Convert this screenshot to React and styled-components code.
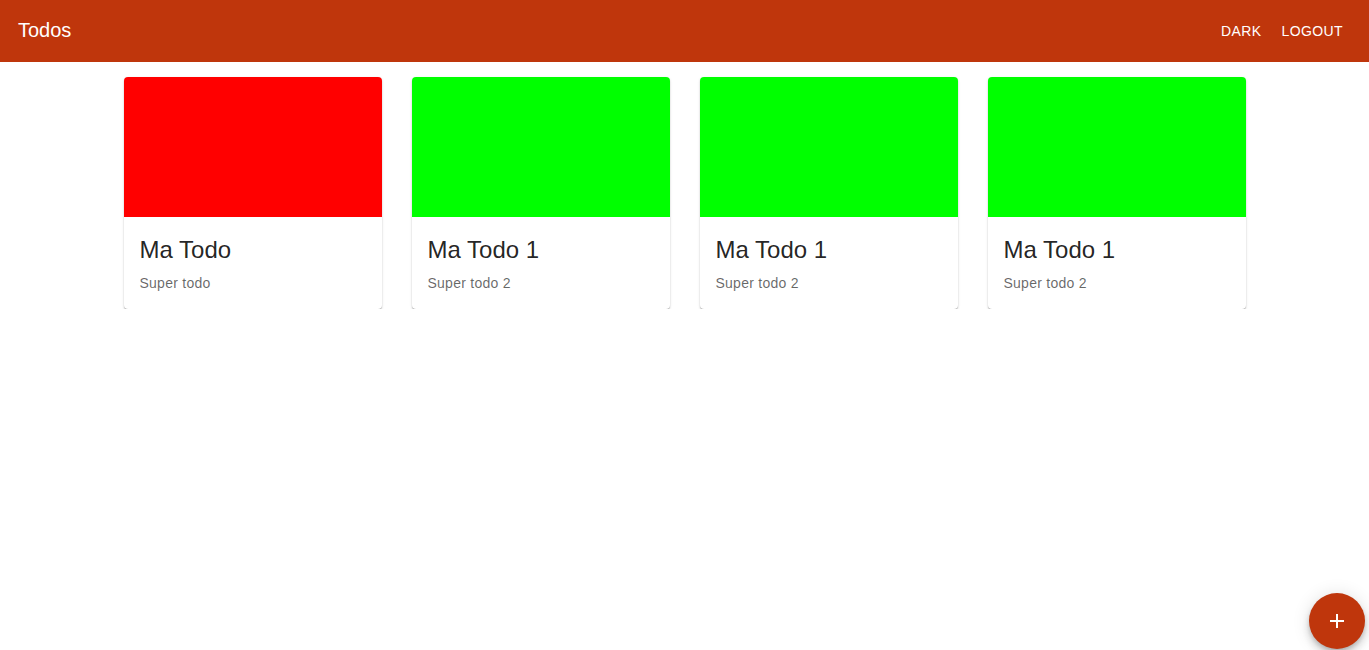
import React from "react";
import styled, { createGlobalStyle } from "styled-components";

const Global = createGlobalStyle`
  body {
    margin: 0;
    background: #fff;
    font-family: "Liberation Sans", Arial, sans-serif;
  }
`;

const Bar = styled.header`
  height: 62px;
  background: #bf360c;
  color: #fff;
  display: flex;
  align-items: center;
  padding: 0 18px 0 18px;
  box-sizing: border-box;
`;

const Title = styled.div`
  font-size: 20px;
  flex: 1;
  margin-top: -2px;
`;

const BarButton = styled.button`
  background: none;
  border: none;
  color: #fff;
  font-family: "Liberation Sans", Arial, sans-serif;
  font-size: 14px;
  letter-spacing: 0.4px;
  text-transform: uppercase;
  padding: 6px 8px;
  margin-left: 4px;
  margin-top: -1px;
  cursor: pointer;
`;

const Grid = styled.main`
  display: flex;
  justify-content: center;
  gap: 30px;
  padding-top: 15px;
`;

const Card = styled.div`
  width: 258px;
  border-radius: 4px;
  overflow: hidden;
  background: #fff;
  box-shadow: 0 2px 2px -1px rgba(0, 0, 0, 0.25), 0 1px 1px 0 rgba(0, 0, 0, 0.16),
    0 1px 3px 0 rgba(0, 0, 0, 0.12);
`;

const Media = styled.div`
  height: 140px;
  background: ${(p) => (p.$done ? "#00ff00" : "#ff0000")};
`;

const Content = styled.div`
  padding: 17px 16px 16px;
`;

const Heading = styled.div`
  font-size: 24px;
  line-height: 32px;
  color: rgba(0, 0, 0, 0.87);
  margin-bottom: 7px;
`;

const Sub = styled.div`
  font-size: 14px;
  line-height: 20px;
  letter-spacing: 0.25px;
  color: rgba(0, 0, 0, 0.6);
`;

const Fab = styled.button`
  position: fixed;
  right: 4px;
  bottom: 1px;
  width: 56px;
  height: 56px;
  border-radius: 50%;
  border: none;
  background: #bf360c;
  color: #fff;
  display: flex;
  align-items: center;
  justify-content: center;
  box-shadow: 0 3px 5px -1px rgba(0, 0, 0, 0.2), 0 6px 10px 0 rgba(0, 0, 0, 0.14),
    0 1px 18px 0 rgba(0, 0, 0, 0.12);
  cursor: pointer;
`;

const todos = [
  { title: "Ma Todo", desc: "Super todo", done: false },
  { title: "Ma Todo 1", desc: "Super todo 2", done: true },
  { title: "Ma Todo 1", desc: "Super todo 2", done: true },
  { title: "Ma Todo 1", desc: "Super todo 2", done: true },
];

export default function App() {
  return (
    <>
      <Global />
      <Bar>
        <Title>Todos</Title>
        <BarButton>Dark</BarButton>
        <BarButton>Logout</BarButton>
      </Bar>
      <Grid>
        {todos.map((t, i) => (
          <Card key={i}>
            <Media $done={t.done} />
            <Content>
              <Heading>{t.title}</Heading>
              <Sub>{t.desc}</Sub>
            </Content>
          </Card>
        ))}
      </Grid>
      <Fab aria-label="add">
        <svg width="24" height="24" viewBox="0 0 24 24" fill="currentColor">
          <path d="M19 13h-6v6h-2v-6H5v-2h6V5h2v6h6v2z" />
        </svg>
      </Fab>
    </>
  );
}
